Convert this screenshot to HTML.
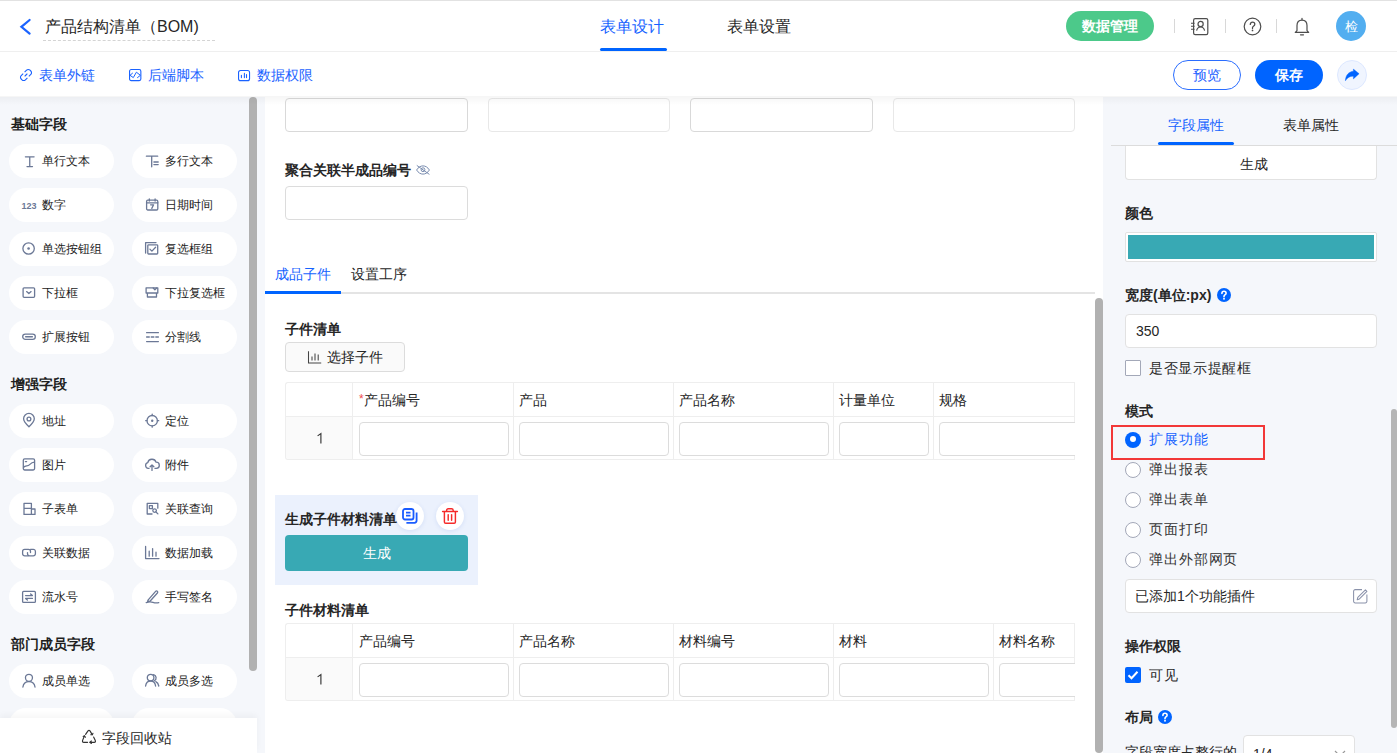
<!DOCTYPE html><html><head><meta charset="utf-8"><style>
*{box-sizing:border-box;margin:0;padding:0}
html,body{width:1397px;height:753px;overflow:hidden;background:#fff}
body{position:relative;font-family:"Liberation Sans",sans-serif;color:#262626;font-size:14px}
.a{position:absolute}
.t{position:absolute;white-space:nowrap}
svg{position:absolute;overflow:visible}
.pill{position:absolute;width:105px;height:34px;border-radius:17px;background:#fff}
.pill span{position:absolute;left:33px;top:6px;font-size:12px;line-height:22px;color:#222;white-space:nowrap}
.sec{position:absolute;left:11px;font-size:14px;font-weight:bold;color:#1f1f1f;line-height:20px;white-space:nowrap}
.inp{position:absolute;border:1px solid #dcdcdc;border-radius:4px;background:#fff}
.lbl{position:absolute;font-size:14px;font-weight:bold;color:#262626;line-height:20px;white-space:nowrap}
.cell{position:absolute;font-size:14px;color:#262626;line-height:20px;white-space:nowrap}
.radio{position:absolute;width:16px;height:16px;border-radius:50%;border:1px solid #a3a8b8;background:#fff}
</style></head><body>
<div class="a" style="left:0;top:0;width:1397px;height:1px;background:#e2e2e2"></div>
<div class="a" style="left:0;top:51px;width:1397px;height:1px;background:#efefef"></div>
<svg width="12" height="16" style="left:20px;top:19px" viewBox="0 0 12 16"><path d="M9.6 1 L1.4 7.8 L9.6 14.6" fill="none" stroke="#1b63ff" stroke-width="2.2" stroke-linecap="round" stroke-linejoin="miter"/></svg>
<div class="t" style="left:45px;top:11px;font-size:16px;line-height:32px;color:#262626">产品结构清单（BOM)</div>
<div class="a" style="left:43px;top:40px;width:172px;height:0;border-top:1px dashed #d4d4d4"></div>
<div class="t" style="left:600px;top:11px;font-size:16px;line-height:32px;color:#1663ff">表单设计</div>
<div class="a" style="left:600px;top:48px;width:67px;height:3px;border-radius:2px;background:#0064ff"></div>
<div class="t" style="left:727px;top:11px;font-size:16px;line-height:32px;color:#262626">表单设置</div>
<div class="a" style="left:1066px;top:11px;width:88px;height:30px;border-radius:15px;background:#4cc98a"></div>
<div class="t" style="left:1082px;top:11px;font-size:14px;font-weight:bold;line-height:30px;color:#fff">数据管理</div>
<div class="a" style="left:1174px;top:19px;width:1px;height:14px;background:#d8d8d8"></div>
<div class="a" style="left:1225px;top:19px;width:1px;height:14px;background:#d8d8d8"></div>
<div class="a" style="left:1276px;top:19px;width:1px;height:14px;background:#d8d8d8"></div>
<svg width="18" height="18" style="left:1191px;top:18px" viewBox="0 0 18 18"><rect x="2.6" y="0.6" width="14.2" height="16" rx="1.6" fill="none" stroke="#4d4d4d" stroke-width="1.2"/><path d="M0 5.2h3.6M0 8.2h3.6M0 11.2h3.6" stroke="#4d4d4d" stroke-width="1.1"/><circle cx="9.6" cy="6" r="2.6" fill="none" stroke="#4d4d4d" stroke-width="1.2"/><path d="M5.6 12.6c0.6-2.4 2-3.6 4-3.6s3.4 1.2 4 3.6" fill="none" stroke="#4d4d4d" stroke-width="1.2"/></svg>
<svg width="19" height="19" style="left:1242.5px;top:16.8px" viewBox="0 0 19 19"><circle cx="9.5" cy="9.5" r="8.3" fill="none" stroke="#4d4d4d" stroke-width="1.2"/><path d="M7.3 7.4c0-1.4 1-2.3 2.2-2.3s2.3 0.9 2.3 2.1c0 1-0.6 1.5-1.4 2-0.6 0.4-0.9 0.8-0.9 1.6v0.6" fill="none" stroke="#4d4d4d" stroke-width="1.3" stroke-linecap="round"/><circle cx="9.5" cy="13.4" r="0.85" fill="#4d4d4d"/></svg>
<svg width="16" height="18" style="left:1294px;top:17.5px" viewBox="0 0 16 18"><path d="M8 0.4v1.2" stroke="#4d4d4d" stroke-width="1.2" stroke-linecap="round"/><path d="M3 12.6V7.6C3 4.4 5 2.2 8 2.2s5 2.2 5 5.4v5l1.7 1.8H1.3z" fill="none" stroke="#4d4d4d" stroke-width="1.2" stroke-linejoin="round"/><path d="M6.5 16.8h3" stroke="#4d4d4d" stroke-width="1.2" stroke-linecap="round"/></svg>
<div class="a" style="left:1336px;top:11px;width:30px;height:30px;border-radius:50%;background:#52aef0"></div>
<div class="t" style="left:1336px;top:11.5px;width:30px;text-align:center;font-size:12.5px;line-height:30px;color:#fff">检</div>
<svg width="12" height="12" style="left:20px;top:69px" viewBox="0 0 12 12"><path d="M5 7 L7 5" stroke="#1a62ff" stroke-width="1.1" stroke-linecap="round"/><path d="M4.6 3.2 L6.6 1.2a2.4 2.4 0 0 1 3.4 0l0.8 0.8a2.4 2.4 0 0 1 0 3.4L8.8 7.4" fill="none" stroke="#1a62ff" stroke-width="1.1"/><path d="M7.4 8.8 L5.4 10.8a2.4 2.4 0 0 1 -3.4 0l-0.8 -0.8a2.4 2.4 0 0 1 0 -3.4L3.2 4.6" fill="none" stroke="#1a62ff" stroke-width="1.1"/></svg>
<div class="t" style="left:39px;top:65px;font-size:14px;line-height:20px;color:#1a62ff">表单外链</div>
<svg width="13" height="13" style="left:129px;top:69px" viewBox="0 0 13 13"><rect x="0.55" y="0.55" width="11.3" height="11.1" rx="1.6" fill="none" stroke="#1a62ff" stroke-width="1.1"/><path d="M3.5 4.2L1 6.3L4.3 8.6L7.4 3.2L11.4 6.3L8.5 8.6" fill="none" stroke="#1a62ff" stroke-width="1" stroke-linejoin="round" stroke-linecap="round"/></svg>
<div class="t" style="left:147.5px;top:65px;font-size:14px;line-height:20px;color:#1a62ff">后端脚本</div>
<svg width="13" height="12" style="left:238px;top:70px" viewBox="0 0 13 12"><rect x="0.55" y="0.55" width="11" height="10.1" rx="2" fill="none" stroke="#1a62ff" stroke-width="1.1"/><path d="M3.4 5.2V7.6M6.4 3.4V7.6M8.5 4.6V7.6" fill="none" stroke="#1a62ff" stroke-width="1.1" stroke-linecap="round"/></svg>
<div class="t" style="left:257px;top:65px;font-size:14px;line-height:20px;color:#1a62ff">数据权限</div>
<div class="a" style="left:1173px;top:60px;width:68px;height:30px;border-radius:15px;border:1px solid #2a6dff;background:#fff"></div>
<div class="t" style="left:1173px;top:60px;width:68px;text-align:center;font-size:14px;line-height:30px;color:#1f5fff">预览</div>
<div class="a" style="left:1255px;top:60px;width:68px;height:30px;border-radius:15px;background:#0064ff"></div>
<div class="t" style="left:1255px;top:60px;width:68px;text-align:center;font-size:14px;font-weight:bold;line-height:30px;color:#fff">保存</div>
<div class="a" style="left:1337px;top:60px;width:30px;height:30px;border-radius:50%;background:#f0f5ff;border:1px solid #dde8ff"></div>
<svg width="16" height="14" style="left:1344px;top:68px" viewBox="0 0 16 14"><path d="M9.4 1.1L15.1 5.7L9.4 10.9V8.2C5.9 8 3.4 9.6 1.4 12.8C1.5 7.4 4.6 3.7 9.4 3.2Z" fill="#0064ff" stroke="#0064ff" stroke-width="0.4" stroke-linejoin="round"/></svg>
<div class="a" style="left:0;top:97px;width:265px;height:656px;background:#f5f7fb"></div>
<div class="a" style="left:1103px;top:97px;width:294px;height:656px;background:#f5f7fb"></div>
<div class="sec" style="top:114px">基础字段</div>
<div class="pill" style="left:9px;top:144px"><span>单行文本</span></div>
<svg width="16" height="16" style="left:21px;top:152px" viewBox="0 0 16 16"><path d="M4.4 4.8H13.1M8.75 4.8V14.6M6 14.6H11.5" stroke="#6b7896" fill="none" stroke-width="1.3" stroke-linecap="round" stroke-linejoin="round"/></svg>
<div class="pill" style="left:132px;top:144px"><span>多行文本</span></div>
<svg width="16" height="16" style="left:144px;top:152px" viewBox="0 0 16 16"><path d="M2.4 4.2H13.7M7.7 4.2V14.8M9.9 10H14.2M9.9 12.6H14.2" stroke="#6b7896" fill="none" stroke-width="1.3" stroke-linecap="round" stroke-linejoin="round"/></svg>
<div class="pill" style="left:9px;top:188px"><span>数字</span></div>
<div class="t" style="left:21.5px;top:199px;font-size:9px;line-height:14px;font-weight:bold;color:#6b7896">123</div>
<div class="pill" style="left:132px;top:188px"><span>日期时间</span></div>
<svg width="16" height="16" style="left:144px;top:196px" viewBox="0 0 16 16"><rect x="2.6" y="4.2" width="11.2" height="9.8" rx="1.2" stroke="#6b7896" fill="none" stroke-width="1.3" stroke-linecap="round" stroke-linejoin="round"/><path d="M2.6 6.8H13.8M5.3 2.9V5M11.1 2.9V5M6.6 8.8H9.6L7.8 12.4" stroke="#6b7896" fill="none" stroke-width="1.3" stroke-linecap="round" stroke-linejoin="round"/></svg>
<div class="pill" style="left:9px;top:232px"><span>单选按钮组</span></div>
<svg width="16" height="16" style="left:21px;top:240px" viewBox="0 0 16 16"><circle cx="7.6" cy="8.5" r="5.7" stroke="#6b7896" fill="none" stroke-width="1.3" stroke-linecap="round" stroke-linejoin="round"/><circle cx="7.6" cy="8.5" r="1.3" fill="#6b7896" stroke="none"/></svg>
<div class="pill" style="left:132px;top:232px"><span>复选框组</span></div>
<svg width="16" height="16" style="left:144px;top:240px" viewBox="0 0 16 16"><path d="M1.6 13V2.6H12" stroke="#6b7896" fill="none" stroke-width="1.3" stroke-linecap="round" stroke-linejoin="round"/><rect x="3.8" y="4.8" width="9.9" height="9.2" rx="0.8" stroke="#6b7896" fill="none" stroke-width="1.3" stroke-linecap="round" stroke-linejoin="round"/><path d="M5.9 9.1L7.9 11.1L11.6 7.2" stroke="#6b7896" fill="none" stroke-width="1.3" stroke-linecap="round" stroke-linejoin="round"/></svg>
<div class="pill" style="left:9px;top:276px"><span>下拉框</span></div>
<svg width="16" height="16" style="left:21px;top:284px" viewBox="0 0 16 16"><rect x="2.1" y="3.8" width="11.5" height="9.5" rx="1" stroke="#6b7896" fill="none" stroke-width="1.3" stroke-linecap="round" stroke-linejoin="round"/><path d="M5.6 7.6L7.85 9.6L10.1 7.6" stroke="#6b7896" fill="none" stroke-width="1.3" stroke-linecap="round" stroke-linejoin="round"/></svg>
<div class="pill" style="left:132px;top:276px"><span>下拉复选框</span></div>
<svg width="16" height="16" style="left:144px;top:284px" viewBox="0 0 16 16"><path d="M2.1 9V3.8H13.8V9ZM3.4 9V13H12.5V9" stroke="#6b7896" fill="none" stroke-width="1.3" stroke-linecap="round" stroke-linejoin="round"/><path d="M9.2 4L10.9 5.8L12.6 4" stroke="#6b7896" fill="none" stroke-width="1.3" stroke-linecap="round" stroke-linejoin="round"/></svg>
<div class="pill" style="left:9px;top:320px"><span>扩展按钮</span></div>
<svg width="16" height="16" style="left:21px;top:328px" viewBox="0 0 16 16"><rect x="1.7" y="6.1" width="12.6" height="5.3" rx="2.65" stroke="#6b7896" fill="none" stroke-width="1.3" stroke-linecap="round" stroke-linejoin="round"/><path d="M4.6 8.75H11.4" stroke="#6b7896" fill="none" stroke-width="1.3" stroke-linecap="round" stroke-linejoin="round"/></svg>
<div class="pill" style="left:132px;top:320px"><span>分割线</span></div>
<svg width="16" height="16" style="left:144px;top:328px" viewBox="0 0 16 16"><path d="M2.6 4.7H14.4M2.6 9H5.3M7.2 9H9.9M11.8 9H14.4M2.6 13.6H14.4" stroke="#6b7896" fill="none" stroke-width="1.3" stroke-linecap="round" stroke-linejoin="round"/></svg>
<div class="sec" style="top:374px">增强字段</div>
<div class="pill" style="left:9px;top:404px"><span>地址</span></div>
<svg width="16" height="16" style="left:21px;top:412px" viewBox="0 0 16 16"><path d="M7.95 14.8C4.6 11.6 2.6 9.1 2.6 6.8A5.35 5.35 0 0 1 13.3 6.8C13.3 9.1 11.3 11.6 7.95 14.8Z" stroke="#6b7896" fill="none" stroke-width="1.3" stroke-linecap="round" stroke-linejoin="round"/><circle cx="7.95" cy="7" r="1.9" stroke="#6b7896" fill="none" stroke-width="1.3" stroke-linecap="round" stroke-linejoin="round"/></svg>
<div class="pill" style="left:132px;top:404px"><span>定位</span></div>
<svg width="16" height="16" style="left:144px;top:412px" viewBox="0 0 16 16"><circle cx="8.2" cy="8.7" r="5.2" stroke="#6b7896" fill="none" stroke-width="1.3" stroke-linecap="round" stroke-linejoin="round"/><circle cx="8.2" cy="8.7" r="1.2" fill="#6b7896" stroke="none"/><path d="M8.2 2.2V3.5M8.2 13.9V15.2M1.7 8.7H3M13.4 8.7H14.7" stroke="#6b7896" fill="none" stroke-width="1.3" stroke-linecap="round" stroke-linejoin="round"/></svg>
<div class="pill" style="left:9px;top:448px"><span>图片</span></div>
<svg width="16" height="16" style="left:21px;top:456px" viewBox="0 0 16 16"><rect x="2.3" y="2.9" width="11.3" height="11.1" rx="1.4" stroke="#6b7896" fill="none" stroke-width="1.3" stroke-linecap="round" stroke-linejoin="round"/><path d="M2.6 11.2C4.6 9 6.6 10.6 8.6 8.6C10.2 7 11.6 6.2 13.4 6.2M4.4 5.6H5.6" stroke="#6b7896" fill="none" stroke-width="1.3" stroke-linecap="round" stroke-linejoin="round"/></svg>
<div class="pill" style="left:132px;top:448px"><span>附件</span></div>
<svg width="16" height="16" style="left:144px;top:456px" viewBox="0 0 16 16"><path d="M5 12.4H4.3A2.9 2.9 0 0 1 3.8 6.7A4.3 4.3 0 0 1 12.1 6.2A3 3 0 0 1 12.3 12.4H11" stroke="#6b7896" fill="none" stroke-width="1.3" stroke-linecap="round" stroke-linejoin="round"/><path d="M8 14.4V9M6.1 10.8L8 8.9L9.9 10.8" stroke="#6b7896" fill="none" stroke-width="1.3" stroke-linecap="round" stroke-linejoin="round"/></svg>
<div class="pill" style="left:9px;top:492px"><span>子表单</span></div>
<svg width="16" height="16" style="left:21px;top:500px" viewBox="0 0 16 16"><path d="M3 14.4V3.4H10.4V14.4ZM3 8.4H10.4M10.4 9H14V14.4H10.4" stroke="#6b7896" fill="none" stroke-width="1.3" stroke-linecap="round" stroke-linejoin="round"/></svg>
<div class="pill" style="left:132px;top:492px"><span>关联查询</span></div>
<svg width="16" height="16" style="left:144px;top:500px" viewBox="0 0 16 16"><path d="M8 14H3.2V3.4H13.8V8.2" stroke="#6b7896" fill="none" stroke-width="1.3" stroke-linecap="round" stroke-linejoin="round"/><rect x="5.4" y="5.6" width="3" height="3" stroke="#6b7896" fill="none" stroke-width="1.3" stroke-linecap="round" stroke-linejoin="round"/><circle cx="10.6" cy="10.6" r="1.8" stroke="#6b7896" fill="none" stroke-width="1.3" stroke-linecap="round" stroke-linejoin="round"/><path d="M12 12L13.9 13.9" stroke="#6b7896" fill="none" stroke-width="1.3" stroke-linecap="round" stroke-linejoin="round"/></svg>
<div class="pill" style="left:9px;top:536px"><span>关联数据</span></div>
<svg width="16" height="16" style="left:21px;top:544px" viewBox="0 0 16 16"><path d="M7.2 11.9H3.7A2.1 2.1 0 0 1 1.6 9.8V7.4A2.1 2.1 0 0 1 3.7 5.3H7.4A2.1 2.1 0 0 1 9.5 7.4V8.6" stroke="#6b7896" fill="none" stroke-width="1.3" stroke-linecap="round" stroke-linejoin="round"/><path d="M6.5 8.6V9.8A2.1 2.1 0 0 0 8.6 11.9H12.3A2.1 2.1 0 0 0 14.4 9.8V7.4A2.1 2.1 0 0 0 12.3 5.3H9.5" stroke="#6b7896" fill="none" stroke-width="1.3" stroke-linecap="round" stroke-linejoin="round"/></svg>
<div class="pill" style="left:132px;top:536px"><span>数据加载</span></div>
<svg width="16" height="16" style="left:144px;top:544px" viewBox="0 0 16 16"><path d="M1.6 2.4V14.6H15M5.2 7.2V12.2M8.6 4.6V12.2M12 8.2V12.2" stroke="#6b7896" fill="none" stroke-width="1.3" stroke-linecap="round" stroke-linejoin="round"/></svg>
<div class="pill" style="left:9px;top:580px"><span>流水号</span></div>
<svg width="16" height="16" style="left:21px;top:588px" viewBox="0 0 16 16"><rect x="1.6" y="3.4" width="12.8" height="11" rx="1" stroke="#6b7896" fill="none" stroke-width="1.3" stroke-linecap="round" stroke-linejoin="round"/><path d="M4.6 7.6H11.4L9.6 6M11.4 10.4H4.6L6.4 12" stroke="#6b7896" fill="none" stroke-width="1.3" stroke-linecap="round" stroke-linejoin="round"/></svg>
<div class="pill" style="left:132px;top:580px"><span>手写签名</span></div>
<svg width="16" height="16" style="left:144px;top:588px" viewBox="0 0 16 16"><path d="M4 12.2L11.6 3.4A1.2 1.2 0 0 1 13.4 5L6 13.2L3.6 13.6Z" stroke="#6b7896" fill="none" stroke-width="1.3" stroke-linecap="round" stroke-linejoin="round"/><path d="M2.2 14.6Q6 13.4 9 14.4T14.8 14.6" stroke="#6b7896" fill="none" stroke-width="1.3" stroke-linecap="round" stroke-linejoin="round"/></svg>
<div class="sec" style="top:634px">部门成员字段</div>
<div class="pill" style="left:9px;top:664px"><span>成员单选</span></div>
<svg width="16" height="16" style="left:21px;top:672px" viewBox="0 0 16 16"><circle cx="7.95" cy="5.8" r="3.5" stroke="#6b7896" fill="none" stroke-width="1.3" stroke-linecap="round" stroke-linejoin="round"/><path d="M1.9 15C2.4 11.4 4.7 9.6 7.95 9.6S13.5 11.4 14 15" stroke="#6b7896" fill="none" stroke-width="1.3" stroke-linecap="round" stroke-linejoin="round"/></svg>
<div class="pill" style="left:132px;top:664px"><span>成员多选</span></div>
<svg width="16" height="16" style="left:144px;top:672px" viewBox="0 0 16 16"><circle cx="6.6" cy="5.6" r="3.3" stroke="#6b7896" fill="none" stroke-width="1.3" stroke-linecap="round" stroke-linejoin="round"/><path d="M1.6 14C2 10.7 4 9 6.6 9S11.2 10.7 11.6 14M9.6 2.6A3.3 3.3 0 0 1 10.4 8.7M11.8 9.6C13.4 10.4 14.4 12 14.8 14" stroke="#6b7896" fill="none" stroke-width="1.3" stroke-linecap="round" stroke-linejoin="round"/></svg>
<div class="pill" style="left:9px;top:708px"></div>
<div class="pill" style="left:132px;top:708px"></div>
<div class="a" style="left:249px;top:97px;width:8px;height:574px;border-radius:4px;background:#b1b1b1"></div>
<div class="a" style="left:0;top:718px;width:257px;height:35px;background:#fff;box-shadow:0 -3px 6px rgba(0,0,0,0.04)"></div>
<svg width="14" height="13" style="left:82px;top:729.5px" viewBox="0 0 14 13"><g fill="none" stroke="#333" stroke-width="1.15" stroke-linejoin="round" stroke-linecap="round"><path d="M3.6 4.4 L6 0.9 Q7 -0.2 8 0.9 L10.2 4.6"/><path d="M8.9 4.7 L10.3 4.8 L10.9 3.4"/><path d="M2.4 6 L0.6 10.4 Q0.1 12.3 1.8 12.3 H5.6"/><path d="M1.2 6.5 L2.5 5.8 L3.4 7.2"/><path d="M8 12.3 H12.2 Q13.9 12.3 13.3 10.6 L11.6 7.1"/><path d="M9.4 11 L7.9 12.3 L9.4 13.5"/></g></svg>
<div class="t" style="left:102px;top:728px;font-size:14px;line-height:20px;color:#262626">字段回收站</div>
<div class="inp" style="left:285px;top:98px;width:183px;height:34px;border-color:#d9d9d9"></div>
<div class="inp" style="left:488px;top:98px;width:182px;height:34px;border-color:#e8e8e8"></div>
<div class="inp" style="left:690px;top:98px;width:183px;height:34px;border-color:#d9d9d9"></div>
<div class="inp" style="left:893px;top:98px;width:182px;height:34px;border-color:#e8e8e8"></div>
<div class="lbl" style="left:285px;top:160px">聚合关联半成品编号</div>
<svg width="14" height="10" style="left:416px;top:164.8px" viewBox="0 0 14 10"><g fill="none" stroke="#7a8db0" stroke-width="1"><path d="M0.6 5C2.4 2.1 4.6 0.9 7 0.9S11.6 2.1 13.4 5C11.6 7.9 9.4 9.1 7 9.1S2.4 7.9 0.6 5Z"/><circle cx="7" cy="4.7" r="1.9"/><path d="M0.8 0.4L13.4 9.4"/></g></svg>
<div class="inp" style="left:285px;top:186px;width:183px;height:34px"></div>
<div class="t" style="left:275px;top:264px;font-size:14px;line-height:20px;color:#1663ff">成品子件</div>
<div class="t" style="left:351px;top:264px;font-size:14px;line-height:20px;color:#262626">设置工序</div>
<div class="a" style="left:265px;top:292px;width:830px;height:2px;background:#e4e4e4"></div>
<div class="a" style="left:265px;top:291px;width:76px;height:3px;background:#0064ff"></div>
<div class="lbl" style="left:285px;top:319px">子件清单</div>
<div class="a" style="left:285px;top:342px;width:120px;height:30px;border-radius:4px;border:1px solid #dcdcdc;background:#fafafa"></div>
<svg width="14" height="13" style="left:308px;top:350.5px" viewBox="0 0 14 13"><path d="M0.5 0.3V12H13.2M4 5.4V9.5M7 2.4V9.5M10.2 3.4V9.5" fill="none" stroke="#444" stroke-width="1.05"/></svg>
<div class="t" style="left:327px;top:347px;font-size:14px;line-height:20px;color:#262626">选择子件</div>
<div class="a" style="left:265px;top:370px;width:830px;height:383px;overflow:hidden">
</div>
<div class="a" style="left:285px;top:382px;width:790px;height:78px;border:1px solid #eeeeee;border-right:none;border-radius:3px 0 0 3px;background:#fff"></div>
<div class="a" style="left:286px;top:416px;width:66px;height:43px;border-radius:0 0 0 2px;background:#fafafa"></div>
<div class="a" style="left:285px;top:416px;width:790px;height:1px;background:#eeeeee"></div>
<div class="a" style="left:352px;top:382px;width:1px;height:78px;background:#eeeeee"></div>
<div class="a" style="left:513px;top:382px;width:1px;height:78px;background:#eeeeee"></div>
<div class="a" style="left:673px;top:382px;width:1px;height:78px;background:#eeeeee"></div>
<div class="a" style="left:833px;top:382px;width:1px;height:78px;background:#eeeeee"></div>
<div class="a" style="left:933px;top:382px;width:1px;height:78px;background:#eeeeee"></div>
<div class="a" style="left:1074px;top:382px;width:1px;height:78px;background:#eeeeee"></div>
<svg width="6" height="12" style="left:316.5px;top:433.0px" viewBox="0 0 6 12"><path d="M0.6 2.9L3.9 0.6V10.5" fill="none" stroke="#333" stroke-width="1.15" stroke-linejoin="miter"/></svg>
<div class="t" style="left:359px;top:390px;font-size:14px;line-height:20px;color:#262626"><span style="color:#f04b4b;font-size:12px;position:relative;top:-2px">*</span>产品编号</div>
<div class="inp" style="left:359px;top:422px;width:150px;height:34px"></div>
<div class="t" style="left:519px;top:390px;font-size:14px;line-height:20px;color:#262626">产品</div>
<div class="inp" style="left:519px;top:422px;width:150px;height:34px"></div>
<div class="t" style="left:679px;top:390px;font-size:14px;line-height:20px;color:#262626">产品名称</div>
<div class="inp" style="left:679px;top:422px;width:150px;height:34px"></div>
<div class="t" style="left:839px;top:390px;font-size:14px;line-height:20px;color:#262626">计量单位</div>
<div class="inp" style="left:839px;top:422px;width:90px;height:34px"></div>
<div class="t" style="left:939px;top:390px;font-size:14px;line-height:20px;color:#262626">规格</div>
<div class="inp" style="left:939px;top:422px;width:257px;height:34px"></div>
<div class="a" style="left:275px;top:495px;width:203px;height:90px;background:#ebf1fd"></div>
<div class="lbl" style="left:285px;top:509px">生成子件材料清单</div>
<div class="a" style="left:396px;top:502px;width:28px;height:28px;border-radius:50%;background:#fff;box-shadow:0 1px 4px rgba(40,90,200,0.12)"></div>
<div class="a" style="left:436px;top:502px;width:28px;height:28px;border-radius:50%;background:#fff;box-shadow:0 1px 4px rgba(40,90,200,0.12)"></div>
<svg width="16" height="16" style="left:402px;top:508px" viewBox="0 0 16 16"><rect x="1" y="1" width="10.5" height="10.5" rx="2" fill="none" stroke="#1a5cff" stroke-width="1.8"/><path d="M4 4.6h4.5M4 7.6h4.5" stroke="#1a5cff" stroke-width="1.6"/><path d="M14.6 4.6v8a2.2 2.2 0 0 1-2.2 2.2H4.4" fill="none" stroke="#1a5cff" stroke-width="1.8"/></svg>
<svg width="16" height="16" style="left:441.5px;top:508px" viewBox="0 0 16 16"><g fill="none" stroke="#f52a2a" stroke-width="1.45" stroke-linecap="round"><path d="M0.6 3.4H15.4"/><path d="M4.6 3.3V2.4A1.6 1.6 0 0 1 6.2 0.8H9.6A1.6 1.6 0 0 1 11.2 2.4V3.3"/><path d="M2.4 3.8V13.9C2.4 14.7 2.9 15.2 3.7 15.2H12.1C12.9 15.2 13.4 14.7 13.4 13.9V3.8"/><path d="M6.2 6.6V12.2M9.6 6.6V12.2"/></g></svg>
<div class="a" style="left:285px;top:535px;width:183px;height:36px;border-radius:4px;background:#38a9b4"></div>
<div class="t" style="left:285px;top:543px;width:183px;text-align:center;font-size:14px;line-height:20px;color:#fff">生成</div>
<div class="lbl" style="left:285px;top:600px">子件材料清单</div>
<div class="a" style="left:285px;top:623px;width:790px;height:78px;border:1px solid #eeeeee;border-right:none;border-radius:3px 0 0 3px;background:#fff"></div>
<div class="a" style="left:286px;top:657px;width:66px;height:43px;border-radius:0 0 0 2px;background:#fafafa"></div>
<div class="a" style="left:285px;top:657px;width:790px;height:1px;background:#eeeeee"></div>
<div class="a" style="left:352px;top:623px;width:1px;height:78px;background:#eeeeee"></div>
<div class="a" style="left:513px;top:623px;width:1px;height:78px;background:#eeeeee"></div>
<div class="a" style="left:673px;top:623px;width:1px;height:78px;background:#eeeeee"></div>
<div class="a" style="left:833px;top:623px;width:1px;height:78px;background:#eeeeee"></div>
<div class="a" style="left:993px;top:623px;width:1px;height:78px;background:#eeeeee"></div>
<div class="a" style="left:1074px;top:623px;width:1px;height:78px;background:#eeeeee"></div>
<svg width="6" height="12" style="left:316.5px;top:674.0px" viewBox="0 0 6 12"><path d="M0.6 2.9L3.9 0.6V10.5" fill="none" stroke="#333" stroke-width="1.15" stroke-linejoin="miter"/></svg>
<div class="t" style="left:359px;top:631px;font-size:14px;line-height:20px;color:#262626">产品编号</div>
<div class="inp" style="left:359px;top:663px;width:150px;height:34px"></div>
<div class="t" style="left:519px;top:631px;font-size:14px;line-height:20px;color:#262626">产品名称</div>
<div class="inp" style="left:519px;top:663px;width:150px;height:34px"></div>
<div class="t" style="left:679px;top:631px;font-size:14px;line-height:20px;color:#262626">材料编号</div>
<div class="inp" style="left:679px;top:663px;width:150px;height:34px"></div>
<div class="t" style="left:839px;top:631px;font-size:14px;line-height:20px;color:#262626">材料</div>
<div class="inp" style="left:839px;top:663px;width:150px;height:34px"></div>
<div class="t" style="left:999px;top:631px;font-size:14px;line-height:20px;color:#262626">材料名称</div>
<div class="inp" style="left:999px;top:663px;width:197px;height:34px"></div>
<div class="a" style="left:1075px;top:370px;width:28px;height:383px;background:#fff"></div>
<div class="a" style="left:1095px;top:298px;width:8px;height:455px;border-radius:4px;background:#b1b1b1"></div>
<div class="a" style="left:1103px;top:97px;width:294px;height:656px;background:#f5f7fb"></div>
<div class="t" style="left:1168px;top:115px;font-size:14px;line-height:20px;color:#1663ff">字段属性</div>
<div class="t" style="left:1283px;top:115px;font-size:14px;line-height:20px;color:#262626">表单属性</div>
<div class="a" style="left:1111px;top:145px;width:286px;height:1px;background:#dcdcdc"></div>
<div class="a" style="left:1158px;top:142px;width:76px;height:3px;border-radius:1.5px;background:#0064ff"></div>
<div class="inp" style="left:1125px;top:146px;width:252px;height:34px;border-color:#e2e2e2;border-top:none;border-radius:0 0 4px 4px"></div>
<div class="t" style="left:1128px;top:154px;width:252px;text-align:center;font-size:14px;line-height:20px;color:#262626">生成</div>
<div class="lbl" style="left:1125px;top:203px">颜色</div>
<div class="a" style="left:1125px;top:232px;width:252px;height:30px;border:1px solid #e2e2e2;border-radius:2px;background:#fff"></div>
<div class="a" style="left:1128px;top:235px;width:246px;height:24px;background:#38a9b4"></div>
<div class="lbl" style="left:1125px;top:285px">宽度(单位:px)</div>
<svg width="14" height="14" style="left:1217px;top:288px" viewBox="0 0 14 14"><circle cx="7" cy="7" r="7" fill="#0064ff"/><path d="M4.9 5.4c0-1.3 0.9-2.1 2.1-2.1s2.1 0.8 2.1 1.9c0 0.9-0.6 1.3-1.2 1.7-0.6 0.4-0.9 0.7-0.9 1.5v0.4" fill="none" stroke="#fff" stroke-width="1.6" stroke-linecap="round"/><circle cx="7" cy="10.8" r="0.95" fill="#fff"/></svg>
<div class="inp" style="left:1125px;top:314px;width:252px;height:34px;border-color:#e2e2e2"></div>
<div class="t" style="left:1136px;top:321px;font-size:14px;line-height:20px;color:#262626">350</div>
<div class="a" style="left:1125px;top:360px;width:16px;height:16px;border:1px solid #a3a8b8;border-radius:1px;background:#fff"></div>
<div class="t" style="left:1149px;top:358px;font-size:14px;line-height:20px;letter-spacing:0.7px;color:#262626">是否显示提醒框</div>
<div class="lbl" style="left:1125px;top:401px">模式</div>
<div class="a" style="left:1111px;top:425px;width:154px;height:35px;border:2.5px solid #f23838"></div>
<div class="radio" style="left:1125px;top:431.5px;border:none;background:#0064ff"></div>
<div class="a" style="left:1130px;top:436px;width:6px;height:6px;border-radius:50%;background:#fff"></div>
<div class="t" style="left:1149px;top:429px;font-size:14px;line-height:20px;letter-spacing:0.9px;color:#1663ff">扩展功能</div>
<div class="radio" style="left:1125px;top:461.5px"></div>
<div class="t" style="left:1149px;top:459px;font-size:14px;line-height:20px;letter-spacing:0.9px;color:#333">弹出报表</div>
<div class="radio" style="left:1125px;top:491.5px"></div>
<div class="t" style="left:1149px;top:489px;font-size:14px;line-height:20px;letter-spacing:0.9px;color:#333">弹出表单</div>
<div class="radio" style="left:1125px;top:521.5px"></div>
<div class="t" style="left:1149px;top:519px;font-size:14px;line-height:20px;letter-spacing:0.9px;color:#333">页面打印</div>
<div class="radio" style="left:1125px;top:551.5px"></div>
<div class="t" style="left:1149px;top:549px;font-size:14px;line-height:20px;letter-spacing:0.9px;color:#333">弹出外部网页</div>
<div class="inp" style="left:1125px;top:579px;width:252px;height:34px;border-color:#e2e2e2"></div>
<div class="t" style="left:1135px;top:586px;font-size:14px;line-height:20px;color:#262626">已添加1个功能插件</div>
<svg width="15" height="15" style="left:1353px;top:588.5px" viewBox="0 0 15 15"><g fill="none" stroke="#8a92aa" stroke-width="1.05" stroke-linejoin="round"><path d="M9 0.6H2.2A1.6 1.6 0 0 0 0.6 2.2V12.3A1.6 1.6 0 0 0 2.2 13.9H12.3A1.6 1.6 0 0 0 13.9 12.3V5.4"/><path d="M4.2 10.8L4.8 8.4L12.4 0.9L13.9 2.4L6.4 9.9Z"/></g></svg>
<div class="lbl" style="left:1125px;top:636px">操作权限</div>
<div class="a" style="left:1125px;top:667px;width:16px;height:16px;border-radius:2px;background:#0064ff"></div>
<svg width="16" height="16" style="left:1125px;top:667px" viewBox="0 0 16 16"><path d="M3.5 8.2l3 3 6-6.4" fill="none" stroke="#fff" stroke-width="2"/></svg>
<div class="t" style="left:1149px;top:665px;font-size:14px;line-height:20px;letter-spacing:0.9px;color:#262626">可见</div>
<div class="lbl" style="left:1125px;top:707px">布局</div>
<svg width="14" height="14" style="left:1158px;top:710px" viewBox="0 0 14 14"><circle cx="7" cy="7" r="7" fill="#0064ff"/><path d="M4.9 5.4c0-1.3 0.9-2.1 2.1-2.1s2.1 0.8 2.1 1.9c0 0.9-0.6 1.3-1.2 1.7-0.6 0.4-0.9 0.7-0.9 1.5v0.4" fill="none" stroke="#fff" stroke-width="1.6" stroke-linecap="round"/><circle cx="7" cy="10.8" r="0.95" fill="#fff"/></svg>
<div class="t" style="left:1125px;top:742px;font-size:14px;line-height:20px;color:#262626">字段宽度占整行的</div>
<div class="inp" style="left:1243px;top:735px;width:112px;height:34px;border-color:#e2e2e2"></div>
<div class="t" style="left:1253px;top:743.5px;font-size:14px;line-height:20px;color:#262626">1/4</div>
<svg width="12" height="8" style="left:1334px;top:750px" viewBox="0 0 12 8"><path d="M1 1l5 5 5-5" fill="none" stroke="#999" stroke-width="1.2"/></svg>
<div class="a" style="left:1391px;top:409px;width:6px;height:319px;border-radius:3px;background:#b5b5b5"></div>
<div class="a" style="left:0;top:96px;width:1397px;height:9px;background:linear-gradient(rgba(0,0,0,0.04),rgba(0,0,0,0))"></div>
</body></html>
